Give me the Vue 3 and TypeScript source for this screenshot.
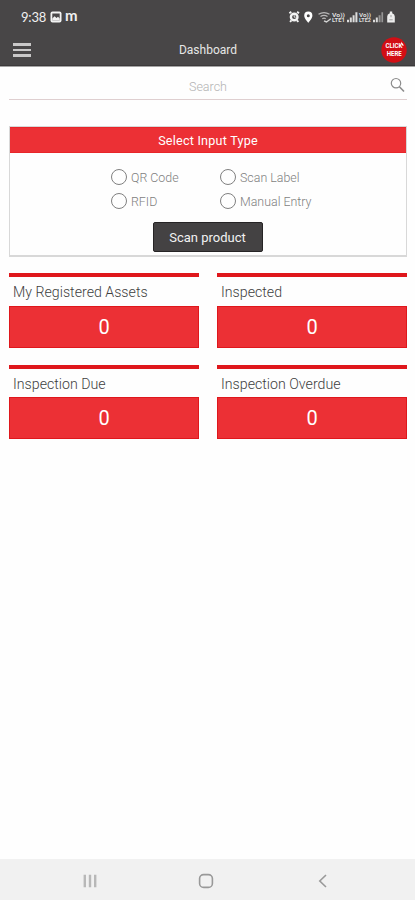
<script setup lang="ts">
import { ref } from 'vue'

interface Tile {
  label: string
  count: number
}

const inputTypes: string[] = ['QR Code', 'Scan Label', 'RFID', 'Manual Entry']
const selected = ref<string>('')
const query = ref<string>('')
const tiles: Tile[] = [
  { label: 'My Registered Assets', count: 0 },
  { label: 'Inspected', count: 0 },
  { label: 'Inspection Due', count: 0 },
  { label: 'Inspection Overdue', count: 0 },
]
</script>

<template>
  <div class="screen">
    <header class="top">
      <div class="status">
        <div class="status-left">
          <span class="time">9:38</span>
          <svg width="12" height="12" viewBox="0 0 12 12">
            <rect x="0.5" y="0.5" width="11" height="11" rx="2" fill="#f2f2f2" />
            <rect x="2.3" y="2.5" width="7.4" height="6.8" fill="#4a4849" />
            <path d="M2.3 9.3V7.5L4.6 5.2L6.5 7L8 5.8L9.7 7.5V9.3Z" fill="#f2f2f2" />
          </svg>
          <span class="carrier">m</span>
        </div>
        <svg class="status-icons" width="110" height="14" viewBox="0 0 110 14">
          <g fill="none" stroke="#f4f4f4">
            <circle cx="6.2" cy="7" r="3.3" stroke-width="2.4" />
            <path d="M1.4 3.2L3.3 1.8M11 3.2L9.1 1.8M2 11.8L3.5 10.3M10.4 11.8L8.9 10.3" stroke-width="1.9" />
            <path d="M6.2 5.2V7.2H7.7" stroke-width="0.9" />
          </g>
          <path d="M20.3 1.6a4.1 4.1 0 0 0-4.1 4.1c0 2.7 4.1 7.1 4.1 7.1s4.1-4.4 4.1-7.1a4.1 4.1 0 0 0-4.1-4.1zm0 2.6a1.5 1.5 0 1 1 0 3a1.5 1.5 0 0 1 0-3z" fill="#fff" />
          <g fill="none" stroke="#b9b8b8" stroke-width="1.2">
            <path d="M30.5 4.3Q36 0.8 41.5 4.3M32.5 6.6Q36 4 39.5 6.6M34.3 8.8Q36 7.4 37.7 8.8" />
            <path d="M36 10.8L38.5 12L42.8 8.8" stroke="#d5d5d5" stroke-width="1.4" />
          </g>
          <g class="net" fill="#dddddd">
            <text x="44" y="6.8" textLength="13" lengthAdjust="spacingAndGlyphs">Vo))</text>
            <text x="44" y="12.4" textLength="13" lengthAdjust="spacingAndGlyphs">LTE1</text>
            <text x="71" y="6.8" textLength="12" lengthAdjust="spacingAndGlyphs">Vo))</text>
            <text x="71" y="12.4" textLength="12" lengthAdjust="spacingAndGlyphs">LTE2</text>
          </g>
          <path d="M59 12.2V9.8H61V12.2ZM61.8 12.2V7.6H63.8V12.2ZM64.6 12.2V5.2H66.6V12.2ZM67.4 12.2V2.2H69.4V12.2Z" fill="#dcdcdc" />
          <path d="M85 12.2V9.8H87V12.2ZM87.8 12.2V7.6H89.8V12.2Z" fill="#dcdcdc" />
          <path d="M90.6 12.2V5.2H92.6V12.2ZM93.4 12.2V2.2H95.1V12.2Z" fill="#959494" />
          <path d="M101.8 1.5h2.4v1.8q2.6 0.7 2.6 3.2v6h-7.6v-6q0-2.5 2.6-3.2z" fill="#ededed" />
          <path d="M103 5V7.2M101.3 9.8H104.7" stroke="#999" stroke-width="0.9" />
        </svg>
      </div>
      <div class="appbar">
        <button class="menu" aria-label="Menu"><i></i><i></i><i></i></button>
        <h1>Dashboard</h1>
        <svg class="badge" width="26" height="26" viewBox="0 0 26 26">
          <circle cx="13" cy="13" r="12.7" fill="#d20e14" />
          <g class="badge-text" fill="#fff">
            <text x="4.4" y="11" textLength="17" lengthAdjust="spacingAndGlyphs">CLICK</text>
            <text x="5.8" y="18.8" textLength="15" lengthAdjust="spacingAndGlyphs">HERE</text>
          </g>
          <path d="M20 4.5L23 8.5L20.8 8.6Z" fill="#fff" />
        </svg>
      </div>
    </header>

    <main>
      <div class="search">
        <input v-model="query" placeholder="Search" aria-label="Search" />
        <svg width="15" height="16" viewBox="0 0 15 16" fill="none" stroke="#8c8c8c">
          <circle cx="6" cy="6.2" r="4.7" stroke-width="1.2" />
          <path d="M9.4 9.8L14 14.5" stroke-width="1.6" />
        </svg>
      </div>

      <section class="card">
        <h2>Select Input Type</h2>
        <div class="options">
          <label v-for="type in inputTypes" :key="type">
            <input v-model="selected" type="radio" name="input-type" :value="type" />
            <span>{{ type }}</span>
          </label>
        </div>
        <button class="scan">Scan product</button>
      </section>

      <section class="tiles">
        <article v-for="tile in tiles" :key="tile.label" class="tile">
          <h3>{{ tile.label }}</h3>
          <div class="count">{{ tile.count }}</div>
        </article>
      </section>
    </main>

    <nav class="navbar">
      <svg width="14" height="14" viewBox="0 0 14 14" stroke="#b8b8b8" stroke-width="2.4">
        <path d="M1.8 0.7V13.3M7 0.7V13.3M12.2 0.7V13.3" />
      </svg>
      <svg width="16" height="16" viewBox="0 0 16 16" fill="none" stroke="#999" stroke-width="1.6">
        <rect x="1.6" y="1.6" width="12.8" height="12.8" rx="4" />
      </svg>
      <svg width="14" height="14" viewBox="0 0 14 14" fill="none" stroke="#999" stroke-width="1.6">
        <path d="M11 1L4.8 7L11 13" />
      </svg>
    </nav>
  </div>
</template>

<style>
body {
  margin: 0;
  background: #fefefe;
}
</style>

<style scoped>
* {
  box-sizing: border-box;
}
.screen {
  display: flex;
  flex-direction: column;
  width: 415px;
  height: 900px;
  overflow: hidden;
  background: #fefefe;
  font-family: Roboto, 'Liberation Sans', sans-serif;
}
button,
input {
  font-family: inherit;
}
h1,
h2,
h3 {
  margin: 0;
}
.top {
  height: 67px;
  flex: none;
  background: #484647;
  border-bottom: 1px solid #a5a4a4;
  box-shadow: inset 0 -1px #3c3a3b;
}
.status {
  display: flex;
  justify-content: space-between;
  align-items: center;
  height: 32px;
  padding: 1px 17px 0 21px;
}
.status-left {
  display: flex;
  align-items: center;
  color: #f0f0f0;
}
.time {
  width: 29px;
  font-family: Lato, Roboto, sans-serif;
  font-size: 13px;
  letter-spacing: -0.2px;
}
.carrier {
  margin: -3px 0 0 3px;
  font: bold 15px/14px Lato, sans-serif;
}
.net {
  font-size: 5px;
  font-weight: 700;
}
.appbar {
  display: grid;
  grid-template-columns: 60px 1fr 60px;
  align-items: center;
  height: 35px;
  padding: 1px 8px 0 13px;
}
.menu {
  display: flex;
  flex-direction: column;
  gap: 3px;
  width: 18px;
  padding: 0;
  border: 0;
  background: none;
}
.menu i {
  width: 18px;
  height: 2.5px;
  background: #c9c8c8;
}
h1 {
  padding-right: 4px;
  color: #e6e6e6;
  font-size: 12px;
  font-weight: 400;
  line-height: 16px;
  text-align: center;
}
.badge {
  justify-self: end;
}
.badge-text {
  font-size: 6.5px;
  font-weight: 700;
}
main {
  flex: 1;
  padding: 0 8px 0 9px;
}
.search {
  display: flex;
  align-items: center;
  height: 33px;
  border-bottom: 1px solid #dfcfd0;
  padding: 4px 2px 0 16px;
}
.search input {
  flex: 1;
  min-width: 0;
  padding: 2px 0 0 1px;
  border: 0;
  outline: 0;
  background: none;
  font-size: 12.5px;
  font-weight: 300;
  text-align: center;
}
.search input::placeholder {
  color: #b3b3b3;
}
.card {
  display: flex;
  flex-direction: column;
  align-items: center;
  height: 131px;
  margin-top: 26px;
  border: 1px solid #d8d8d8;
  border-bottom-width: 2px;
}
h2 {
  align-self: stretch;
  height: 26px;
  background: #ec3035;
  border: solid #e8252a;
  border-width: 1px 0;
  color: #fff;
  font-size: 12.6px;
  font-weight: 400;
  letter-spacing: 0.22px;
  line-height: 26px;
  text-align: center;
}
.options {
  display: grid;
  grid-template-columns: 109px 85px;
  grid-auto-rows: 24px;
  margin-top: 12px;
}
.options label {
  display: flex;
  align-items: center;
  gap: 4px;
  color: #7e7e7e;
  font-size: 12.4px;
  font-weight: 300;
  white-space: nowrap;
}
.options input {
  appearance: none;
  flex: none;
  width: 16px;
  height: 16px;
  margin: 0;
  border: 1px solid #808080;
  border-radius: 50%;
}
.options input:checked {
  box-shadow: inset 0 0 0 3px #fefefe;
  background: #ec3035;
}
.scan {
  width: 110px;
  height: 30px;
  margin-top: 9px;
  margin-right: 1px;
  padding: 0;
  border: 1px solid #262425;
  border-radius: 2px;
  background: #444243;
  color: #f2f2f2;
  font-size: 13px;
}
.tiles {
  display: grid;
  grid-template-columns: 190px 190px;
  column-gap: 18px;
  row-gap: 17px;
  margin-top: 16px;
}
.tile {
  height: 74.5px;
  border-top: 4px solid #df171c;
}
h3 {
  height: 28.5px;
  padding-left: 4px;
  color: #3e3e3e;
  font-size: 14.2px;
  font-weight: 300;
  line-height: 31px;
}
.count {
  height: 42px;
  border: 1px solid #df171c;
  background: #ec3035;
  color: #fff;
  font-size: 20px;
  line-height: 41px;
  text-align: center;
}
.navbar {
  display: grid;
  grid-template-columns: repeat(3, 116px);
  justify-content: center;
  justify-items: center;
  align-items: center;
  height: 41px;
  padding: 2px 3px 0 0;
  background: #f1f1f1;
}
</style>
